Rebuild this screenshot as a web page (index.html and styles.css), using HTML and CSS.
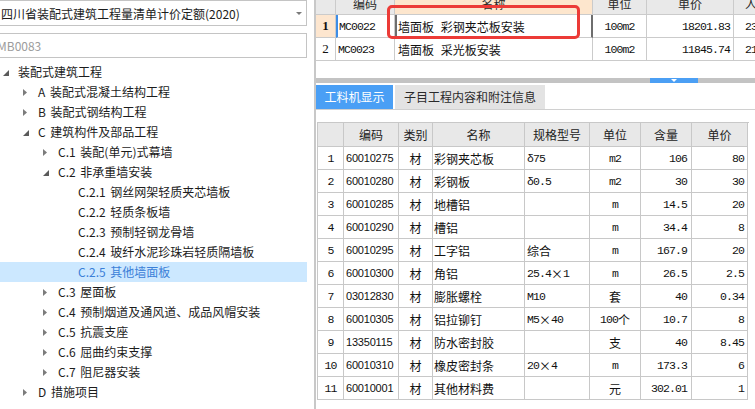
FILE: index.html
```html
<!DOCTYPE html>
<html lang="zh-CN">
<head>
<meta charset="utf-8">
<title>定额</title>
<link rel="stylesheet" href="styles.css">
</head>
<body>
<div class="app">
  <div class="left">
    <div class="select"><span class="select-text">四川省装配式建筑工程量清单计价定额(2020)</span><span class="caret"></span></div>
    <div class="search">MB0083</div>
    <ul class="tree">
      <li class="node l0"><span class="tw"><svg class="exp" width="6" height="6" viewBox="0 0 6 6"><polygon points="6,0 6,6 0,6"/></svg></span><span class="lbl">装配式建筑工程</span></li>
      <li class="node l1"><span class="tw"><svg class="col" width="4" height="7" viewBox="0 0 4 7"><polygon points="0,0 4,3.5 0,7"/></svg></span><span class="lbl">A 装配式混凝土结构工程</span></li>
      <li class="node l1"><span class="tw"><svg class="col" width="4" height="7" viewBox="0 0 4 7"><polygon points="0,0 4,3.5 0,7"/></svg></span><span class="lbl">B 装配式钢结构工程</span></li>
      <li class="node l1"><span class="tw"><svg class="exp" width="6" height="6" viewBox="0 0 6 6"><polygon points="6,0 6,6 0,6"/></svg></span><span class="lbl">C 建筑构件及部品工程</span></li>
      <li class="node l2"><span class="tw"><svg class="col" width="4" height="7" viewBox="0 0 4 7"><polygon points="0,0 4,3.5 0,7"/></svg></span><span class="lbl">C.1 装配(单元)式幕墙</span></li>
      <li class="node l2"><span class="tw"><svg class="exp" width="6" height="6" viewBox="0 0 6 6"><polygon points="6,0 6,6 0,6"/></svg></span><span class="lbl">C.2 非承重墙安装</span></li>
      <li class="node l3"><span class="tw"></span><span class="lbl">C.2.1 钢丝网架轻质夹芯墙板</span></li>
      <li class="node l3"><span class="tw"></span><span class="lbl">C.2.2 轻质条板墙</span></li>
      <li class="node l3"><span class="tw"></span><span class="lbl">C.2.3 预制轻钢龙骨墙</span></li>
      <li class="node l3"><span class="tw"></span><span class="lbl">C.2.4 玻纤水泥珍珠岩轻质隔墙板</span></li>
      <li class="node l3 selected"><span class="tw"></span><span class="lbl">C.2.5 其他墙面板</span></li>
      <li class="node l2"><span class="tw"><svg class="col" width="4" height="7" viewBox="0 0 4 7"><polygon points="0,0 4,3.5 0,7"/></svg></span><span class="lbl">C.3 屋面板</span></li>
      <li class="node l2"><span class="tw"><svg class="col" width="4" height="7" viewBox="0 0 4 7"><polygon points="0,0 4,3.5 0,7"/></svg></span><span class="lbl">C.4 预制烟道及通风道、成品风帽安装</span></li>
      <li class="node l2"><span class="tw"><svg class="col" width="4" height="7" viewBox="0 0 4 7"><polygon points="0,0 4,3.5 0,7"/></svg></span><span class="lbl">C.5 抗震支座</span></li>
      <li class="node l2"><span class="tw"><svg class="col" width="4" height="7" viewBox="0 0 4 7"><polygon points="0,0 4,3.5 0,7"/></svg></span><span class="lbl">C.6 屈曲约束支撑</span></li>
      <li class="node l2"><span class="tw"><svg class="col" width="4" height="7" viewBox="0 0 4 7"><polygon points="0,0 4,3.5 0,7"/></svg></span><span class="lbl">C.7 阻尼器安装</span></li>
      <li class="node l1"><span class="tw"><svg class="col" width="4" height="7" viewBox="0 0 4 7"><polygon points="0,0 4,3.5 0,7"/></svg></span><span class="lbl">D 措施项目</span></li>
    </ul>
  </div>

  <div class="pane">
    <div class="top">
      <div class="qgrid">
        <div class="th"></div>
        <div class="th">编码</div>
        <div class="th th-sel">名称</div>
        <div class="th">单位</div>
        <div class="th">单价</div>
        <div class="th th-left">人工费</div>

        <div class="td rn rn-sel">1</div>
        <div class="td code cur-row mono">MC0022</div>
        <div class="td name cur">墙面板 彩钢夹芯板安装</div>
        <div class="td center mono">100m2</div>
        <div class="td num mono">18201.83</div>
        <div class="td cut mono">2345.61</div>

        <div class="td rn">2</div>
        <div class="td code mono">MC0023</div>
        <div class="td name">墙面板 采光板安装</div>
        <div class="td center mono">100m2</div>
        <div class="td num mono">11845.74</div>
        <div class="td cut mono">2123.40</div>
      </div>
    </div>

    <div class="splitter"><span class="grip"><span class="grip-arrow"></span></span></div>

    <div class="tabs">
      <div class="tab active">工料机显示</div>
      <div class="tab">子目工程内容和附注信息</div>
    </div>

    <div class="mgrid">
      <div class="mh"></div><div class="mh">编码</div><div class="mh">类别</div><div class="mh">名称</div><div class="mh">规格型号</div><div class="mh">单位</div><div class="mh">含量</div><div class="mh">单价</div>

      <div class="mc rnum mono">1</div><div class="mc mcode">60010275</div><div class="mc ctr">材</div><div class="mc mname">彩钢夹芯板</div><div class="mc spec mono">δ75</div><div class="mc ctr mono">m2</div><div class="mc qty mono">106</div><div class="mc price mono">80</div>
      <div class="mc rnum mono">2</div><div class="mc mcode">60010280</div><div class="mc ctr">材</div><div class="mc mname">彩钢板</div><div class="mc spec mono">δ0.5</div><div class="mc ctr mono">m2</div><div class="mc qty mono">30</div><div class="mc price mono">30</div>
      <div class="mc rnum mono">3</div><div class="mc mcode">60010285</div><div class="mc ctr">材</div><div class="mc mname">地槽铝</div><div class="mc spec"></div><div class="mc ctr mono">m</div><div class="mc qty mono">14.5</div><div class="mc price mono">20</div>
      <div class="mc rnum mono">4</div><div class="mc mcode">60010290</div><div class="mc ctr">材</div><div class="mc mname">槽铝</div><div class="mc spec"></div><div class="mc ctr mono">m</div><div class="mc qty mono">34.4</div><div class="mc price mono">8</div>
      <div class="mc rnum mono">5</div><div class="mc mcode">60010295</div><div class="mc ctr">材</div><div class="mc mname">工字铝</div><div class="mc spec">综合</div><div class="mc ctr mono">m</div><div class="mc qty mono">167.9</div><div class="mc price mono">20</div>
      <div class="mc rnum mono">6</div><div class="mc mcode">60010300</div><div class="mc ctr">材</div><div class="mc mname">角铝</div><div class="mc spec mono">25.4<span class="cjk">×</span>1</div><div class="mc ctr mono">m</div><div class="mc qty mono">26.5</div><div class="mc price mono">2.5</div>
      <div class="mc rnum mono">7</div><div class="mc mcode">03012830</div><div class="mc ctr">材</div><div class="mc mname">膨胀螺栓</div><div class="mc spec mono">M10</div><div class="mc ctr">套</div><div class="mc qty mono">40</div><div class="mc price mono">0.34</div>
      <div class="mc rnum mono">8</div><div class="mc mcode">60010305</div><div class="mc ctr">材</div><div class="mc mname">铝拉铆钉</div><div class="mc spec mono">M5<span class="cjk">×</span>40</div><div class="mc ctr"><span class="mono">100</span>个</div><div class="mc qty mono">10.7</div><div class="mc price mono">8</div>
      <div class="mc rnum mono">9</div><div class="mc mcode">13350115</div><div class="mc ctr">材</div><div class="mc mname">防水密封胶</div><div class="mc spec"></div><div class="mc ctr">支</div><div class="mc qty mono">40</div><div class="mc price mono">8.45</div>
      <div class="mc rnum mono">10</div><div class="mc mcode">60010310</div><div class="mc ctr">材</div><div class="mc mname">橡皮密封条</div><div class="mc spec mono">20<span class="cjk">×</span>4</div><div class="mc ctr mono">m</div><div class="mc qty mono">173.3</div><div class="mc price mono">6</div>
      <div class="mc rnum mono">11</div><div class="mc mcode">60010001</div><div class="mc ctr">材</div><div class="mc mname">其他材料费</div><div class="mc spec"></div><div class="mc ctr">元</div><div class="mc qty mono">302.01</div><div class="mc price mono">1</div>
    </div>
  </div>

  <div class="annot"></div>
</div>
</body>
</html>
```

FILE: styles.css
```css
html, body {
  margin: 0;
  padding: 0;
  background: #ffffff;
}

body {
  width: 755px;
  height: 409px;
  overflow: hidden;
  font-family: "Noto Sans CJK SC", "Microsoft YaHei", sans-serif;
  font-size: 12px;
  color: #1c1c1c;
}

.app {
  position: relative;
  display: flex;
  width: 755px;
  height: 409px;
  overflow: hidden;
}

/* ---------- left pane ---------- */
.left {
  flex: none;
  width: 314px;
  padding-right: 7px;
  box-sizing: border-box;
  overflow: hidden;
}

.select {
  display: flex;
  align-items: center;
  height: 26px;
  margin-left: -3px;
  padding-left: 3px;
  border: 1px solid #c4c4c4;
  box-sizing: border-box;
  color: #1c1c1c;
}

.select-text {
  white-space: nowrap;
}

.caret {
  margin-left: auto;
  margin-right: 4px;
  width: 0;
  height: 0;
  border-left: 3px solid transparent;
  border-right: 3px solid transparent;
  border-top: 3px solid #7a7a7a;
}

.search {
  height: 25px;
  margin-top: 7px;
  margin-left: -3px;
  border: 1px solid #c4c4c4;
  box-sizing: border-box;
  line-height: 23px;
  color: #9c9c9c;
  white-space: nowrap;
  text-indent: -1px;
}

.tree {
  list-style: none;
  margin: 4px 0 0 0;
  padding: 0;
}

.node {
  display: flex;
  align-items: center;
  height: 20px;
  white-space: nowrap;
}

.node.l0 { padding-left: 0; }
.node.l1 { padding-left: 20px; }
.node.l2 { padding-left: 40px; }
.node.l3 { padding-left: 60px; }

.tw {
  flex: none;
  width: 18px;
  height: 20px;
  position: relative;
}

.tw svg {
  position: absolute;
}

.tw svg.exp {
  left: 3px;
  top: 8px;
  fill: #5a5a5a;
}

.tw svg.col {
  left: 3px;
  top: 7px;
  fill: #7c7c7c;
}

.lbl {
  line-height: 20px;
  word-spacing: 2px;
}

.node.selected {
  background: #cce8ff;
}

.node.selected .lbl {
  color: #3b80d8;
}

/* ---------- right pane ---------- */
.pane {
  flex: 1;
  display: flex;
  flex-direction: column;
  border-left: 2px solid #c8c8c8;
  min-width: 0;
  overflow: hidden;
}

.mono {
  font-family: "Liberation Mono", monospace;
  font-size: 11.5px;
  letter-spacing: -0.9px;
}

.cjk {
  font-family: "Noto Sans CJK SC", sans-serif;
  font-size: 12px;
  letter-spacing: 0;
}

.top {
  height: 78px;
  flex: none;
}

.qgrid {
  display: grid;
  grid-template-columns: 20px 59px 198px 54px 87px 80px;
  grid-template-rows: 15px 23px 23px;
  width: 498px;
}

.th, .td {
  box-sizing: border-box;
  border-right: 1px solid #cbcbcb;
  border-bottom: 1px solid #cbcbcb;
  overflow: hidden;
  white-space: nowrap;
}

.th {
  background: #e9e9e9;
  text-align: center;
  line-height: 8px;
  color: #2a2a2a;
}

.th.th-sel {
  background: #fde6cd;
}

.th.th-left {
  text-align: left;
  padding-left: 11px;
}

.td {
  display: flex;
  align-items: center;
  color: #111;
}

.td.rn {
  justify-content: center;
  font-family: "Liberation Serif", serif;
  font-size: 13px;
}

.td.rn-sel {
  background: #fde6cf;
  font-weight: bold;
}

.td.code {
  padding-left: 2px;
}

.td.cur-row {
  border-left: 2px solid #3d8de6;
  padding-left: 1px;
}

.td.name {
  padding-left: 3px;
  word-spacing: 4px;
}

.td.cur {
  border-left: 2px solid #6e6e6e;
  border-right: 2px solid #6e6e6e;
  padding-left: 1px;
}

.td.center {
  justify-content: center;
}

.td.num {
  justify-content: flex-end;
  padding-right: 3px;
}

.td.cut {
  padding-left: 11px;
}

/* splitter */
.splitter {
  flex: none;
  display: flex;
  height: 5px;
  background: #c3c3c3;
}

.grip {
  display: flex;
  justify-content: center;
  align-items: center;
  margin-left: 334px;
  width: 48px;
  height: 5px;
  background: #4b9ff4;
}

.grip-arrow {
  width: 0;
  height: 0;
  border-left: 3px solid transparent;
  border-right: 3px solid transparent;
  border-top: 3px solid #ffffff;
}

/* tabs */
.tabs {
  flex: none;
  display: flex;
  gap: 2px;
  margin-top: 2px;
  height: 25px;
  border-bottom: 1px solid #d0d0d0;
  box-sizing: border-box;
}

.tab {
  height: 24px;
  line-height: 24px;
  text-align: center;
  background: #e3e3e3;
  color: #2a2a2a;
  width: 150px;
}

.tab.active {
  width: 77px;
  background: #4a9ff5;
  color: #ffffff;
}

/* material grid */
.mgrid {
  flex: none;
  display: grid;
  grid-template-columns: 26px 55px 34px 92px 65px 51px 51px 56px;
  grid-template-rows: 24px repeat(11, 23px);
  width: 431px;
  margin-top: 12px;
  margin-left: 1px;
  border-left: 1px solid #c8c8c8;
  border-top: 1px solid #c8c8c8;
}

.mh, .mc {
  box-sizing: border-box;
  border-right: 1px solid #c8c8c8;
  border-bottom: 1px solid #c8c8c8;
  display: flex;
  align-items: center;
  overflow: hidden;
  white-space: nowrap;
}

.mh {
  background: #e8e8e8;
  justify-content: center;
  color: #222;
}

.mc {
  color: #111;
}

.mc.rnum {
  justify-content: center;
}

.mc.mcode {
  padding-left: 2px;
  font-family: "Liberation Sans", sans-serif;
  font-size: 11px;
  letter-spacing: -0.2px;
}

.mc.ctr {
  justify-content: center;
}

.mc.mname {
  padding-left: 1px;
}

.mc.spec {
  padding-left: 2px;
}

.mc.qty {
  justify-content: flex-end;
  padding-right: 4px;
}

.mc.price {
  justify-content: flex-end;
  padding-right: 3px;
}

/* red annotation box drawn over the grid */
.annot {
  position: absolute;
  left: 387px;
  top: 5px;
  width: 193px;
  height: 34px;
  box-sizing: border-box;
  border: 3px solid #ec3b37;
  border-radius: 5px;
  pointer-events: none;
}
```
